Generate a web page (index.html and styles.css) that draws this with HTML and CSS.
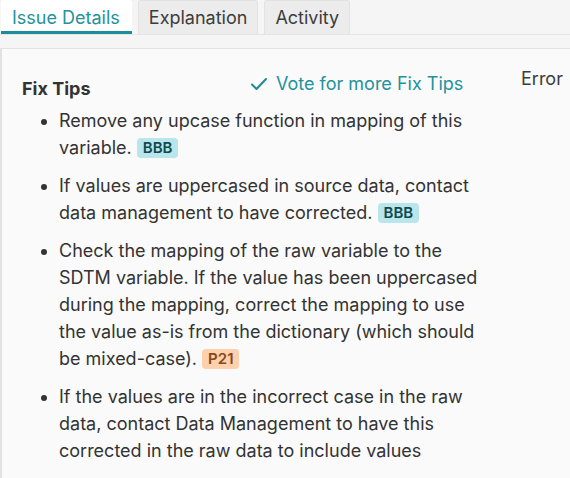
FILE: index.html
```html
<!DOCTYPE html>
<html>
<head>
<meta charset="utf-8">
<link rel="stylesheet" href="styles.css">
</head>
<body>
<div class="tabs">
  <div class="tab active">Issue Details</div>
  <div class="tab">Explanation</div>
  <div class="tab">Activity</div>
</div>
<div class="panel">
  <div class="head">
    <div class="title">Fix Tips</div>
    <div class="vote">
      <svg width="18" height="14" viewBox="0 0 18 14"><path d="M2 7.5 L6.5 12 L16 2" fill="none" stroke="#1e8a93" stroke-width="2" stroke-linecap="round" stroke-linejoin="round"/></svg>
      <span>Vote for more Fix Tips</span>
    </div>
    <div class="error">Error</div>
  </div>
  <ul class="tips">
    <li>Remove any upcase function in mapping of this variable. <span class="badge bbb">BBB</span></li>
    <li>If values are uppercased in source data, contact data management to have corrected. <span class="badge bbb">BBB</span></li>
    <li>Check the mapping of the raw variable to the SDTM variable. If the value has been uppercased during the mapping, correct the mapping to use the value as-is from the dictionary (which should be mixed-case). <span class="badge p21">P21</span></li>
    <li>If the values are in the incorrect case in the raw data, contact Data Management to have this corrected in the raw data to include values</li>
  </ul>
</div>
</body>
</html>
```
FILE: styles.css
```css
html, body {
  margin: 0;
  padding: 0;
}
body {
  background: #f5f5f5;
  font-family: Inter, "Noto Sans", sans-serif;
  color: #333;
  width: 570px;
  height: 478px;
  overflow: hidden;
}
.tabs {
  display: flex;
  gap: 6px;
  padding-left: 1px;
  height: 34px;
  border-bottom: 1px solid #e4e4e4;
}
.tab {
  box-sizing: border-box;
  flex: none;
  white-space: nowrap;
  height: 34px;
  padding: 0 10px;
  display: flex;
  align-items: center;
  font-size: 18px;
  color: #3c3c3c;
  background: #ececec;
  border: 1px solid #e2e2e2;
  border-bottom: none;
  border-radius: 3px 3px 0 0;
}
.tab.active {
  background: #fff;
  color: #23929c;
  border: none;
  border-bottom: 3px solid #1b8f99;
  padding: 3px 12px 0 11px;
}
.panel {
  margin-top: 13px;
  background: #fafafa;
  border-top: 1px solid #e2e2e2;
  border-left: 2px solid #e2e2e2;
  height: 440px;
}
.head {
  display: flex;
  align-items: flex-start;
  padding-top: 26px;
  height: 36px;
}
.title {
  margin-left: 20px;
  width: 228px;
  font-weight: 700;
  font-size: 18px;
  padding-top: 3px;
}
.vote {
  display: flex;
  align-items: center;
  gap: 8px;
  color: #23929c;
  font-size: 18px;
  width: 271px;
  margin-top: -2px;
}
.error {
  font-size: 18px;
  color: #3c3c3c;
  margin-top: -7px;
  white-space: nowrap;
}
.tips {
  margin: -4px 0 0 0;
  padding-left: 57px;
  padding-right: 88px;
  font-size: 18px;
  line-height: 27px;
}
.tips li {
  margin-bottom: 11px;
}
.badge {
  display: inline-block;
  font-size: 15px;
  font-weight: 600;
  line-height: 18px;
  padding: 1px 6px;
  border-radius: 4px;
  vertical-align: 1px;
}
.bbb {
  background: #b8e6ea;
  color: #0f4a50;
}
.p21 {
  background: #fdd0ae;
  color: #8a4717;
}
```
